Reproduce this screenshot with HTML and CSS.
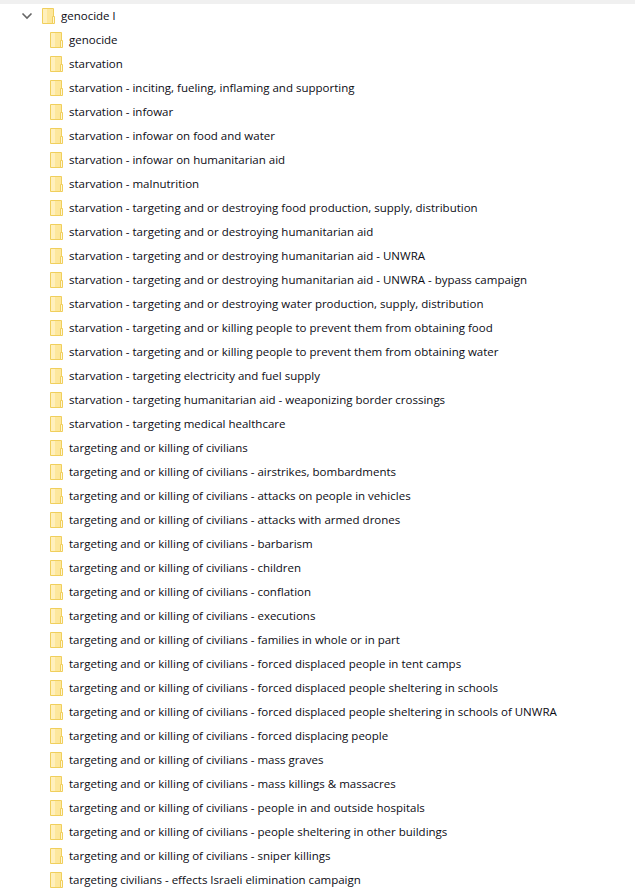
FILE: index.html
```html
<!DOCTYPE html>
<html lang="en">
<head>
<meta charset="utf-8">
<title>genocide l</title>
<link rel="stylesheet" href="styles.css">
</head>
<body>
<svg class="defs" width="0" height="0">
<symbol id="folder" viewBox="0 0 13 16">
<path d="M.5.500h11v15H.5z" fill="#fde79c" stroke="#f0cf5c"/>
<path d="M1 1h4v14H1z" fill="#fff0bd"/>
<path d="M10.500 8.500h2v7h-2z" fill="#fff6d8" stroke="#f0cf5c"/>
</symbol>
</svg>
<main class="tree">
<div class="row root">
<svg class="chevron" viewBox="0 0 12 8"><path d="M1.500 1.500 6 6l4.500-4.500" fill="none" stroke="#666" stroke-width="1.600"/></svg>
<svg class="folder"><use href="#folder"/></svg><span>genocide l</span>
</div>
<ul class="list">
<li><svg class="folder"><use href="#folder"/></svg>genocide</li>
<li><svg class="folder"><use href="#folder"/></svg>starvation</li>
<li><svg class="folder"><use href="#folder"/></svg>starvation - inciting, fueling, inflaming and supporting</li>
<li><svg class="folder"><use href="#folder"/></svg>starvation - infowar</li>
<li><svg class="folder"><use href="#folder"/></svg>starvation - infowar on food and water</li>
<li><svg class="folder"><use href="#folder"/></svg>starvation - infowar on humanitarian aid</li>
<li><svg class="folder"><use href="#folder"/></svg>starvation - malnutrition</li>
<li><svg class="folder"><use href="#folder"/></svg>starvation - targeting and or destroying food production, supply, distribution</li>
<li><svg class="folder"><use href="#folder"/></svg>starvation - targeting and or destroying humanitarian aid</li>
<li><svg class="folder"><use href="#folder"/></svg>starvation - targeting and or destroying humanitarian aid - UNWRA</li>
<li><svg class="folder"><use href="#folder"/></svg>starvation - targeting and or destroying humanitarian aid - UNWRA - bypass campaign</li>
<li><svg class="folder"><use href="#folder"/></svg>starvation - targeting and or destroying water production, supply, distribution</li>
<li><svg class="folder"><use href="#folder"/></svg>starvation - targeting and or killing people to prevent them from obtaining food</li>
<li><svg class="folder"><use href="#folder"/></svg>starvation - targeting and or killing people to prevent them from obtaining water</li>
<li><svg class="folder"><use href="#folder"/></svg>starvation - targeting electricity and fuel supply</li>
<li><svg class="folder"><use href="#folder"/></svg>starvation - targeting humanitarian aid - weaponizing border crossings</li>
<li><svg class="folder"><use href="#folder"/></svg>starvation - targeting medical healthcare</li>
<li><svg class="folder"><use href="#folder"/></svg>targeting and or killing of civilians</li>
<li><svg class="folder"><use href="#folder"/></svg>targeting and or killing of civilians - airstrikes, bombardments</li>
<li><svg class="folder"><use href="#folder"/></svg>targeting and or killing of civilians - attacks on people in vehicles</li>
<li><svg class="folder"><use href="#folder"/></svg>targeting and or killing of civilians - attacks with armed drones</li>
<li><svg class="folder"><use href="#folder"/></svg>targeting and or killing of civilians - barbarism</li>
<li><svg class="folder"><use href="#folder"/></svg>targeting and or killing of civilians - children</li>
<li><svg class="folder"><use href="#folder"/></svg>targeting and or killing of civilians - conflation</li>
<li><svg class="folder"><use href="#folder"/></svg>targeting and or killing of civilians - executions</li>
<li><svg class="folder"><use href="#folder"/></svg>targeting and or killing of civilians - families in whole or in part</li>
<li><svg class="folder"><use href="#folder"/></svg>targeting and or killing of civilians - forced displaced people in tent camps</li>
<li><svg class="folder"><use href="#folder"/></svg>targeting and or killing of civilians - forced displaced people sheltering in schools</li>
<li><svg class="folder"><use href="#folder"/></svg>targeting and or killing of civilians - forced displaced people sheltering in schools of UNWRA</li>
<li><svg class="folder"><use href="#folder"/></svg>targeting and or killing of civilians - forced displacing people</li>
<li><svg class="folder"><use href="#folder"/></svg>targeting and or killing of civilians - mass graves</li>
<li><svg class="folder"><use href="#folder"/></svg>targeting and or killing of civilians - mass killings &amp; massacres</li>
<li><svg class="folder"><use href="#folder"/></svg>targeting and or killing of civilians - people in and outside hospitals</li>
<li><svg class="folder"><use href="#folder"/></svg>targeting and or killing of civilians - people sheltering in other buildings</li>
<li><svg class="folder"><use href="#folder"/></svg>targeting and or killing of civilians - sniper killings</li>
<li><svg class="folder"><use href="#folder"/></svg>targeting civilians - effects Israeli elimination campaign</li>
</ul>
</main>
</body>
</html>
```
FILE: styles.css
```css
html, body {
  margin: 0;
  padding: 0;
  height: 896px;
  overflow: hidden;
  background: #fff;
}
body {
  font-family: "Open Sans", "Noto Sans", sans-serif;
  font-size: 11.5px;
  color: #0c0c14;
}
.defs {
  display: block;
  height: 0;
}
.tree {
  border-top: 4px solid #f0f0f0;
}
.row, .list li {
  display: flex;
  align-items: center;
  height: 24px;
  white-space: nowrap;
  line-height: 22px;
}
.root {
  padding-left: 21px;
}
.chevron {
  width: 12px;
  height: 8px;
  margin-right: 9px;
}
.folder {
  width: 13px;
  height: 16px;
  flex: none;
  margin-right: 6px;
}
.list {
  list-style: none;
  margin: 0;
  padding: 0 0 0 50px;
}
```
